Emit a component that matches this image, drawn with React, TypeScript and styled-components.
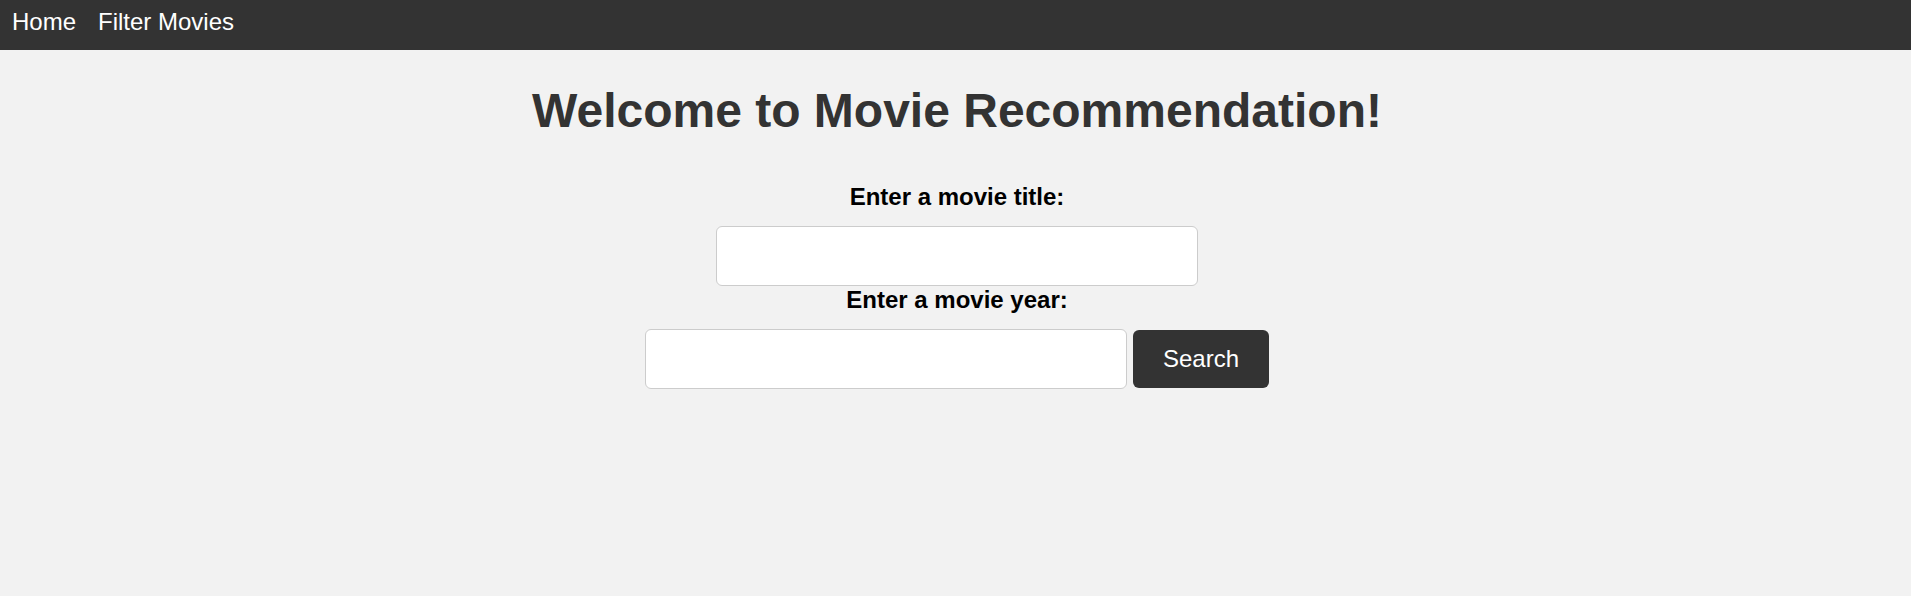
import React from 'react'
import styled, { createGlobalStyle } from 'styled-components'

const GlobalStyle = createGlobalStyle`
  html, body {
    margin: 0;
    padding: 0;
    background: #f2f2f2;
    font-family: 'Liberation Sans', Arial, sans-serif;
  }
`

export default function App() {
  const [title, setTitle] = React.useState('')
  const [year, setYear] = React.useState('')

  return (
    <>
      <GlobalStyle />
      <NavBar>
        <NavLink href="#">Home</NavLink>
        <NavLink href="#">Filter Movies</NavLink>
      </NavBar>
      <Main>
        <Heading>Welcome to Movie Recommendation!</Heading>
        <SearchForm onSubmit={(e) => e.preventDefault()}>
          <Label htmlFor="title">Enter a movie title:</Label>
          <Row>
            <TextInput
              id="title"
              type="text"
              value={title}
              onChange={(e) => setTitle(e.target.value)}
            />
          </Row>
          <Label htmlFor="year">Enter a movie year:</Label>
          <Row>
            <TextInput
              id="year"
              type="text"
              value={year}
              onChange={(e) => setYear(e.target.value)}
            />
            <SearchButton type="submit">Search</SearchButton>
          </Row>
        </SearchForm>
      </Main>
    </>
  )
}

const NavBar = styled.nav`
  display: flex;
  align-items: flex-start;
  gap: 22px;
  height: 50px;
  box-sizing: border-box;
  padding: 8px 12px 0;
  background: #333333;
`

const NavLink = styled.a`
  color: #ffffff;
  text-decoration: none;
  font-size: 24px;
  line-height: normal;
`

const Main = styled.main`
  padding-left: 3px;
  padding-top: 1px;
  text-align: center;
`

const Heading = styled.h1`
  margin: 32px 0;
  font-size: 48px;
  font-weight: bold;
  color: #333333;
`

const SearchForm = styled.form`
  display: flex;
  flex-direction: column;
  align-items: center;
  padding-top: 13px;
`

const Label = styled.label`
  display: block;
  margin-bottom: 15px;
  font-size: 24px;
  font-weight: bold;
  color: #000000;
`

const Row = styled.div`
  display: flex;
  justify-content: center;
  align-items: center;
  gap: 6px;
`

const TextInput = styled.input`
  width: 482px;
  height: 60px;
  box-sizing: border-box;
  padding: 15px;
  border: 1.5px solid #cccccc;
  border-radius: 6px;
  background: #ffffff;
  font-size: 24px;
  font-family: inherit;
  outline: none;
`

const SearchButton = styled.button`
  height: 58px;
  padding: 0 30px;
  border: none;
  border-radius: 6px;
  background: #333333;
  color: #ffffff;
  font-size: 24px;
  font-family: inherit;
  cursor: pointer;
`
